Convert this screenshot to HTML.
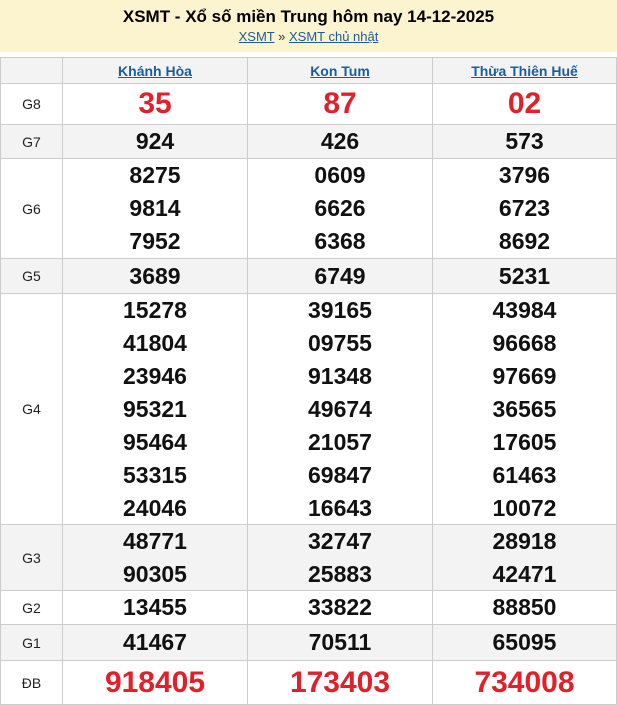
<!DOCTYPE html>
<html><head><meta charset="utf-8"><style>
*{margin:0;padding:0;box-sizing:border-box}
body{width:617px;height:705px;background:#fff;font-family:"Liberation Sans",Arial,sans-serif;position:relative;overflow:hidden}
.hdr{position:absolute;left:0;top:0;width:617px;height:52px;background:#fcf3cf;text-align:center}
.hdr h1{font-size:17px;font-weight:bold;color:#000;padding-top:7px;line-height:20px}
.hdr .bc{font-size:13px;color:#333;line-height:16px;margin-top:2px}
.hdr a{color:#1a5c9c;text-decoration:underline}
.row{position:absolute;left:0;width:617px;border-top:1px solid #ccc;display:flex}
.row.g{background:#f3f3f3}
.c{display:flex;flex-direction:column;justify-content:center;align-items:center;border-left:1px solid #ccc}
.c0{width:62px;border-left:1px solid #ccc;font-size:14px;color:#222}
.c1{width:185px}.c2{width:185px}.c3{width:185px;border-right:1px solid #ccc}
.n{font-size:23px;font-weight:bold;line-height:33px;color:#111}
.r{color:#e0202a;font-size:30px;font-weight:bold}
.p{font-size:14px;color:#1a5c9c;text-decoration:underline;font-weight:bold}
</style></head><body>
<div class="hdr"><h1>XSMT - Xổ số miền Trung hôm nay 14-12-2025</h1>
<div class="bc"><a>XSMT</a> » <a>XSMT chủ nhật</a></div></div>

<div class="row g" style="top:57px;height:26px"><div class="c c0"></div><div class="c c1"><span class="p">Khánh Hòa</span></div><div class="c c2"><span class="p">Kon Tum</span></div><div class="c c3"><span class="p">Thừa Thiên Huế</span></div></div>

<div class="row" style="top:83px;height:41px"><div class="c c0">G8</div><div class="c c1 r">35</div><div class="c c2 r">87</div><div class="c c3 r">02</div></div>

<div class="row g" style="top:124px;height:34px"><div class="c c0">G7</div><div class="c c1"><div class="n">924</div></div><div class="c c2"><div class="n">426</div></div><div class="c c3"><div class="n">573</div></div></div>

<div class="row" style="top:158px;height:100px"><div class="c c0">G6</div><div class="c c1"><div class="n">8275</div><div class="n">9814</div><div class="n">7952</div></div><div class="c c2"><div class="n">0609</div><div class="n">6626</div><div class="n">6368</div></div><div class="c c3"><div class="n">3796</div><div class="n">6723</div><div class="n">8692</div></div></div>

<div class="row g" style="top:258px;height:35px"><div class="c c0">G5</div><div class="c c1"><div class="n">3689</div></div><div class="c c2"><div class="n">6749</div></div><div class="c c3"><div class="n">5231</div></div></div>

<div class="row" style="top:293px;height:231px"><div class="c c0">G4</div>
<div class="c c1"><div class="n">15278</div><div class="n">41804</div><div class="n">23946</div><div class="n">95321</div><div class="n">95464</div><div class="n">53315</div><div class="n">24046</div></div>
<div class="c c2"><div class="n">39165</div><div class="n">09755</div><div class="n">91348</div><div class="n">49674</div><div class="n">21057</div><div class="n">69847</div><div class="n">16643</div></div>
<div class="c c3"><div class="n">43984</div><div class="n">96668</div><div class="n">97669</div><div class="n">36565</div><div class="n">17605</div><div class="n">61463</div><div class="n">10072</div></div></div>

<div class="row g" style="top:524px;height:66px"><div class="c c0">G3</div><div class="c c1"><div class="n">48771</div><div class="n">90305</div></div><div class="c c2"><div class="n">32747</div><div class="n">25883</div></div><div class="c c3"><div class="n">28918</div><div class="n">42471</div></div></div>

<div class="row" style="top:590px;height:34px"><div class="c c0">G2</div><div class="c c1"><div class="n">13455</div></div><div class="c c2"><div class="n">33822</div></div><div class="c c3"><div class="n">88850</div></div></div>

<div class="row g" style="top:624px;height:36px"><div class="c c0">G1</div><div class="c c1"><div class="n">41467</div></div><div class="c c2"><div class="n">70511</div></div><div class="c c3"><div class="n">65095</div></div></div>

<div class="row" style="top:660px;height:45px;border-bottom:1px solid #ccc"><div class="c c0">ĐB</div><div class="c c1 r">918405</div><div class="c c2 r">173403</div><div class="c c3 r">734008</div></div>
</body></html>
